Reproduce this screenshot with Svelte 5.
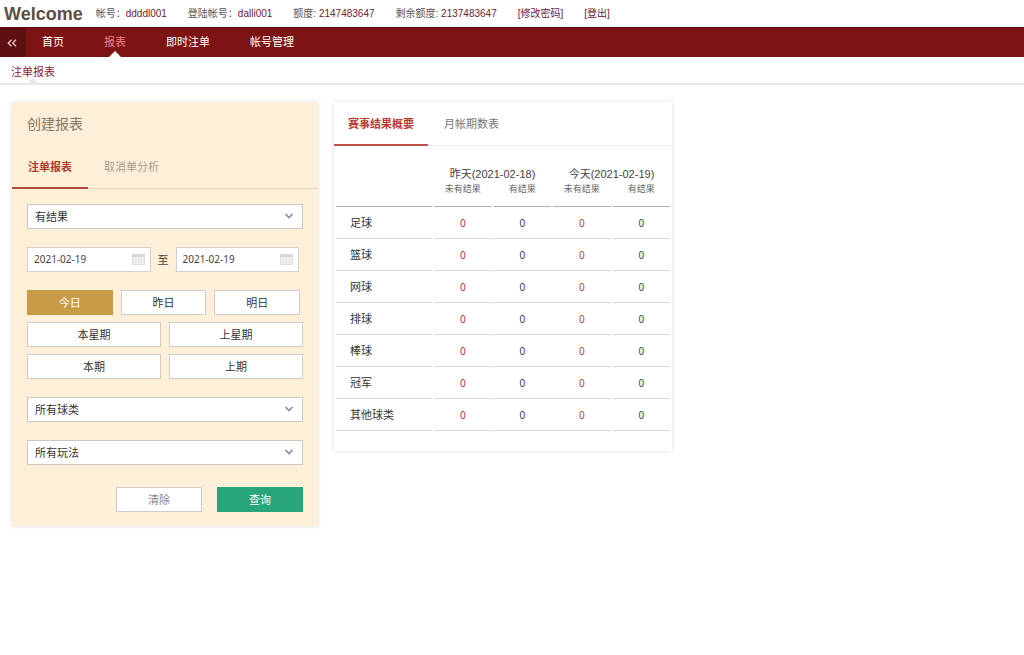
<script lang="ts">
  type Tab = { id: string; label: string };

  const account = [
    { label: "帐号：", value: "ddddl001" },
    { label: "登陆帐号：", value: "dalli001" },
    { label: "额度: ", value: "2147483647" },
    { label: "剩余额度: ", value: "2137483647" },
  ];
  const accountLinks = ["修改密码", "登出"];

  const menu = ["首页", "报表", "即时注单", "帐号管理"];
  let activeMenu = $state("报表");

  const reportTabs: Tab[] = [
    { id: "bets", label: "注单报表" },
    { id: "cancelled", label: "取消单分析" },
  ];
  let reportTab = $state("bets");

  const summaryTabs: Tab[] = [
    { id: "results", label: "赛事结果概要" },
    { id: "periods", label: "月帐期数表" },
  ];
  let summaryTab = $state("results");

  const days = ["今日", "昨日", "明日"];
  const periods = ["本星期", "上星期", "本期", "上期"];
  let range = $state("今日");

  let from = $state("2021-02-19");
  let to = $state("2021-02-19");

  const sports = ["足球", "篮球", "网球", "排球", "棒球", "冠军", "其他球类"];
  const rows = sports.map((name) => ({ name, counts: [0, 0, 0, 0] }));
</script>

{#snippet dropdown(label: string, options: string[])}
  <div class="select">
    <select aria-label={label}>
      {#each options as option}
        <option>{option}</option>
      {/each}
    </select>
    <svg class="chevron" width="10" height="8" viewBox="0 0 10 8">
      <polyline points="1.5,2 5,5.5 8.5,2" fill="none" stroke="currentColor" stroke-width="1.7" />
    </svg>
  </div>
{/snippet}

{#snippet calendar()}
  <svg class="calendar" width="13" height="12" viewBox="0 0 13 12">
    <rect x="0.5" y="1.5" width="12" height="10" fill="#f4f2f1" stroke="#e2e0de" />
    <rect x="0" y="1" width="13" height="3" fill="#d8d5d3" />
    <path d="M3.5 4V11M6.5 4V11M9.5 4V11M1 6.5H12M1 9H12" stroke="#e6e4e2" stroke-width="0.7" />
  </svg>
{/snippet}

<header class="topbar">
  <h1>Welcome</h1>
  {#each account as item}
    <span class="account">{item.label}<b>{item.value}</b></span>
  {/each}
  {#each accountLinks as link}
    <a class="account" href="#top">[{link}]</a>
  {/each}
</header>

<nav class="menu">
  <button class="collapse" aria-label="收起">
    <svg width="10" height="8" viewBox="0 0 10 8">
      <path d="M4.5 0.7L1.2 4L4.5 7.3M9 0.7L5.7 4L9 7.3" fill="none" stroke="currentColor" stroke-width="1.3" />
    </svg>
  </button>
  {#each menu as item}
    <a href="#menu" class:active={item === activeMenu} onclick={() => (activeMenu = item)}>{item}</a>
  {/each}
</nav>

<nav class="submenu">
  <a href="#bets">注单报表</a>
</nav>

<main>
  <section class="card report">
    <h2>创建报表</h2>
    <div class="tabs">
      {#each reportTabs as tab}
        <button class:active={tab.id === reportTab} onclick={() => (reportTab = tab.id)}>{tab.label}</button>
      {/each}
    </div>

    <form onsubmit={(e) => e.preventDefault()}>
      {@render dropdown("结果", ["有结果", "未有结果"])}

      <div class="dates">
        <label class="date">
          <input type="text" aria-label="开始日期" bind:value={from} />
          {@render calendar()}
        </label>
        <span>至</span>
        <label class="date">
          <input type="text" aria-label="结束日期" bind:value={to} />
          {@render calendar()}
        </label>
      </div>

      <div class="ranges">
        <div class="days">
          {#each days as day}
            <button type="button" class="btn" class:selected={day === range} onclick={() => (range = day)}>{day}</button>
          {/each}
        </div>
        <div class="periods">
          {#each periods as period}
            <button type="button" class="btn" class:selected={period === range} onclick={() => (range = period)}>{period}</button>
          {/each}
        </div>
      </div>

      {@render dropdown("球类", ["所有球类", ...sports])}
      {@render dropdown("玩法", ["所有玩法"])}

      <div class="actions">
        <button type="reset" class="btn clear">清除</button>
        <button type="submit" class="btn submit">查询</button>
      </div>
    </form>
  </section>

  <section class="card summary">
    <div class="tabs">
      {#each summaryTabs as tab}
        <button class:active={tab.id === summaryTab} onclick={() => (summaryTab = tab.id)}>{tab.label}</button>
      {/each}
    </div>
    <table>
      <thead>
        <tr class="dates-row">
          <th class="name"></th>
          <th colspan="2">昨天(2021-02-18)</th>
          <th colspan="2">今天(2021-02-19)</th>
        </tr>
        <tr class="kinds-row">
          <th></th>
          <th>未有结果</th>
          <th>有结果</th>
          <th>未有结果</th>
          <th>有结果</th>
        </tr>
      </thead>
      <tbody>
        {#each rows as row}
          <tr>
            <th scope="row">{row.name}</th>
            {#each row.counts as count, i}
              <td class:pending={i === 0} class:today={i === 2}>{count}</td>
            {/each}
          </tr>
        {/each}
      </tbody>
    </table>
  </section>
</main>

<style>
  :global(body) {
    background: #fff;
    color: #444;
    font: 11px/16px "Liberation Sans", "Noto Sans CJK SC", sans-serif;
  }

  a {
    text-decoration: none;
  }

  button,
  input,
  select {
    box-sizing: border-box;
    margin: 0;
    font: inherit;
    border-radius: 0;
  }

  h1,
  h2 {
    margin: 0;
  }

  .topbar {
    display: flex;
    align-items: center;
    height: 27px;
    padding-left: 4px;
    font-size: 10px;
    white-space: nowrap;
  }

  h1 {
    margin-right: 13px;
    color: #5c4f44;
    font-size: 18px;
    line-height: 24px;
  }

  .account {
    margin-right: 21px;
    color: #555;
  }

  .account b,
  a.account {
    color: #6e2233;
    font-weight: normal;
  }

  .menu {
    display: flex;
    height: 30px;
    box-sizing: border-box;
    background: #7d1414;
    border-top: 1px solid #5e0c10;
  }

  .collapse {
    display: flex;
    align-items: center;
    justify-content: center;
    width: 26px;
    padding: 0 2px 0 0;
    border: none;
    background: #5e0f11;
    color: #e6cccc;
    cursor: pointer;
  }

  .menu a {
    position: relative;
    margin-left: 16px;
    margin-right: 22px;
    color: #fff;
    font-size: 11px;
    line-height: 28px;
  }

  .menu .active {
    color: #f08080;
  }

  .menu a + a {
    margin-left: 18px;
  }

  .menu .active::after {
    content: "";
    position: absolute;
    bottom: 0;
    left: 50%;
    margin-left: -6px;
    border: 6px solid transparent;
    border-top: none;
    border-bottom-color: #fff;
  }

  .submenu {
    display: flex;
    height: 28px;
    box-sizing: border-box;
    padding-left: 11px;
    border-bottom: 2px solid #e8e8e8;
  }

  .submenu a {
    position: relative;
    color: #8c1c30;
    line-height: 30px;
  }

  .submenu a::after {
    content: "";
    position: absolute;
    bottom: 0;
    left: 50%;
    margin-left: -5px;
    border: 5px solid transparent;
    border-top: none;
    border-bottom-color: #e8e8e8;
  }

  main {
    display: flex;
    align-items: flex-start;
    gap: 16px;
    padding: 17px 12px;
  }

  .card {
    flex: none;
    background: #fff;
    box-shadow: 0 0 5px rgba(0, 0, 0, 0.13);
  }

  .report {
    width: 306px;
    background: #feefd8;
  }

  .summary {
    width: 338px;
    padding-bottom: 20px;
  }

  h2 {
    padding: 10px 15px 0;
    color: #857564;
    font-size: 14px;
    font-weight: normal;
    line-height: 24px;
  }

  .tabs {
    display: flex;
    padding-top: 2px;
    border-bottom: 1px solid #ededed;
  }

  .tabs button {
    padding: 0 16px;
    margin-bottom: -1px;
    border: none;
    border-bottom: 2px solid transparent;
    background: none;
    color: #777;
    line-height: 40px;
    cursor: pointer;
  }

  .tabs .active {
    padding: 0 14px;
    border-bottom-color: #c0504a;
    color: #b8392f;
    font-weight: bold;
  }

  .report .tabs {
    margin-top: 9px;
    border-bottom-color: #e6d4ba;
  }

  .report .tabs button {
    color: #a89c8c;
  }

  .report .tabs .active {
    padding: 0 16px;
    border-bottom-color: #b5493c;
    color: #a83c28;
  }

  form {
    display: flex;
    flex-direction: column;
    gap: 18px;
    padding: 15px 15px 14px;
  }

  .select {
    position: relative;
    display: flex;
  }

  select {
    flex: 1;
    height: 25px;
    padding: 0 7px;
    appearance: none;
    border: 1px solid #cbc8c2;
    background: #fff;
    color: #333;
  }

  .chevron {
    position: absolute;
    top: 8px;
    right: 9px;
    color: #8c8c8c;
    pointer-events: none;
  }

  .dates {
    display: flex;
    align-items: center;
    gap: 7px;
    padding-right: 4px;
  }

  .date {
    position: relative;
    display: flex;
    flex: 1;
  }

  .date input {
    width: 100%;
    height: 25px;
    padding: 0 24px 2px 6px;
    border: 1px solid #d4d0ca;
    background: #fff;
    color: #444;
    font-family: "Noto Sans", sans-serif;
    font-size: 10px;
  }

  .calendar {
    position: absolute;
    top: 6px;
    right: 6px;
  }

  .ranges,
  .periods,
  .days {
    display: grid;
    gap: 7px 8px;
  }

  .days {
    grid-template-columns: repeat(3, 1fr);
    padding-right: 3px;
  }

  .periods {
    grid-template-columns: 1fr 1fr;
  }

  .btn {
    height: 25px;
    padding: 0;
    border: 1px solid #d0cdc8;
    background: #fff;
    color: #333;
    cursor: pointer;
  }

  .btn.selected {
    border-color: #c89c46;
    background: #c89c46;
    color: #fff;
  }

  .actions {
    display: flex;
    justify-content: flex-end;
    gap: 15px;
    padding-top: 4px;
  }

  .actions .btn {
    width: 86px;
  }

  .clear {
    color: #888;
  }

  .submit {
    border-color: #28a57a;
    background: #28a57a;
    color: #fff;
  }

  table {
    width: 100%;
    table-layout: fixed;
    border-collapse: separate;
    border-spacing: 2px 0;
  }

  th,
  td {
    box-sizing: border-box;
    height: 32px;
    padding: 0;
    border-bottom: 1px solid #d6d6d6;
    font-weight: normal;
    text-align: center;
  }

  .name {
    width: 96px;
  }

  tbody th {
    padding-left: 14px;
    color: #333;
    text-align: left;
  }

  td {
    color: #444;
    font-family: "Noto Sans", sans-serif;
    font-size: 10px;
  }

  .pending {
    color: #b02a3c;
  }

  .today {
    color: #a0503c;
  }

  .dates-row th {
    height: 36px;
    border-bottom: none;
    vertical-align: bottom;
  }

  .kinds-row th {
    height: 25px;
    border-bottom-color: #b0b0b0;
    color: #666;
    font-size: 9px;
    line-height: 14px;
    vertical-align: top;
  }
</style>
